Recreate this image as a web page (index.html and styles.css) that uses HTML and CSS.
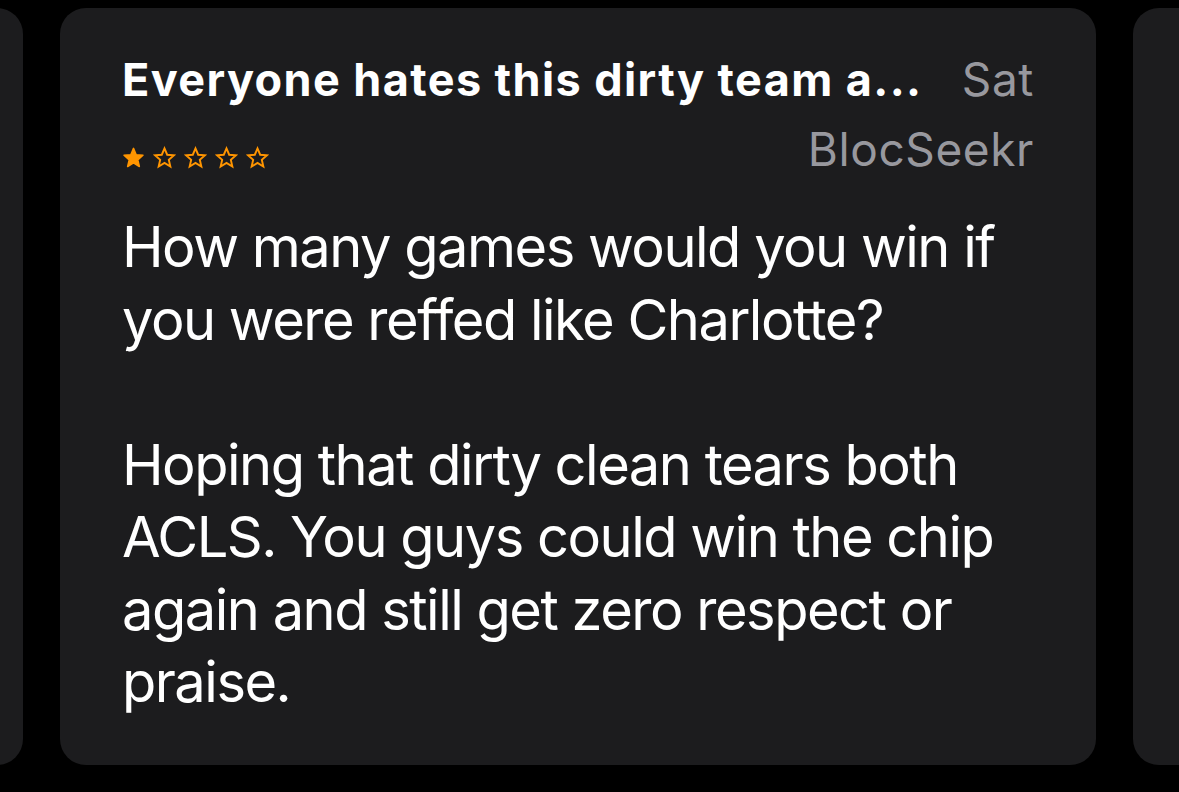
FILE: index.html
```html
<!DOCTYPE html>
<html>
<head>
<meta charset="utf-8">
<link rel="stylesheet" href="styles.css">
</head>
<body>
<div class="track">
  <div class="card ghost"></div>
  <div class="card review">
    <div class="head-row">
      <div class="title">Everyone hates this dirty team a...</div>
      <div class="date">Sat</div>
    </div>
    <div class="sub-row">
      <div class="stars">
        <svg class="star" viewBox="0 0 24 24"><polygon class="fill" points="12,2.5 14.8,9.1 21.9,9.7 16.5,14.4 18.1,21.4 12,17.7 5.9,21.4 7.5,14.4 2.1,9.7 9.2,9.1"/></svg>
        <svg class="star" viewBox="0 0 24 24"><polygon class="line" points="12,2.5 14.8,9.1 21.9,9.7 16.5,14.4 18.1,21.4 12,17.7 5.9,21.4 7.5,14.4 2.1,9.7 9.2,9.1"/></svg>
        <svg class="star" viewBox="0 0 24 24"><polygon class="line" points="12,2.5 14.8,9.1 21.9,9.7 16.5,14.4 18.1,21.4 12,17.7 5.9,21.4 7.5,14.4 2.1,9.7 9.2,9.1"/></svg>
        <svg class="star" viewBox="0 0 24 24"><polygon class="line" points="12,2.5 14.8,9.1 21.9,9.7 16.5,14.4 18.1,21.4 12,17.7 5.9,21.4 7.5,14.4 2.1,9.7 9.2,9.1"/></svg>
        <svg class="star" viewBox="0 0 24 24"><polygon class="line" points="12,2.5 14.8,9.1 21.9,9.7 16.5,14.4 18.1,21.4 12,17.7 5.9,21.4 7.5,14.4 2.1,9.7 9.2,9.1"/></svg>
      </div>
      <div class="author">BlocSeekr</div>
    </div>
    <div class="body">
      <p>How many games would you win if you were reffed like Charlotte?</p>
      <p>Hoping that dirty clean tears both ACLS. You guys could win the chip again and still get zero respect or praise.</p>
    </div>
  </div>
  <div class="card ghost"></div>
</div>
</body>
</html>
```

FILE: styles.css
```css
html, body {
  margin: 0;
  padding: 0;
  background: #000;
  overflow: hidden;
}
body {
  width: 1179px;
  height: 792px;
  font-family: Inter, "Noto Sans", "Liberation Sans", sans-serif;
  color: #fff;
}
.track {
  display: flex;
  gap: 37px;
  margin-left: -1013px;
  padding-top: 8px;
}
.card {
  flex: 0 0 1036px;
  height: 757px;
  background: #1c1c1e;
  border-radius: 26px;
  box-sizing: border-box;
}
.review {
  padding: 46px 62px 0 62px;
}
.head-row {
  display: flex;
  align-items: baseline;
  justify-content: space-between;
  gap: 20px;
}
.title {
  white-space: nowrap;
  font-size: 45px;
  font-weight: 700;
  line-height: 50px;
  letter-spacing: 1.4px;
}
.date, .author {
  color: #98989e;
  font-size: 46px;
  line-height: 50px;
  font-weight: 400;
  letter-spacing: 0.6px;
}
.sub-row {
  display: flex;
  justify-content: space-between;
  align-items: flex-start;
  margin-top: 19px;
  height: 50px;
}
.stars {
  display: flex;
  gap: 8px;
  margin-top: 22px;
}
.star {
  width: 23px;
  height: 23px;
}
.star .fill {
  fill: #ff9500;
  stroke: #ff9500;
  stroke-width: 1.6;
  stroke-linejoin: round;
}
.star .line {
  fill: none;
  stroke: #ff9500;
  stroke-width: 2;
  stroke-linejoin: miter;
}
.body {
  margin-top: 37px;
  font-size: 56px;
  line-height: 72.5px;
  font-weight: 400;
  letter-spacing: -1.5px;
}
.body p {
  margin: 0 0 72.5px 0;
}
```
